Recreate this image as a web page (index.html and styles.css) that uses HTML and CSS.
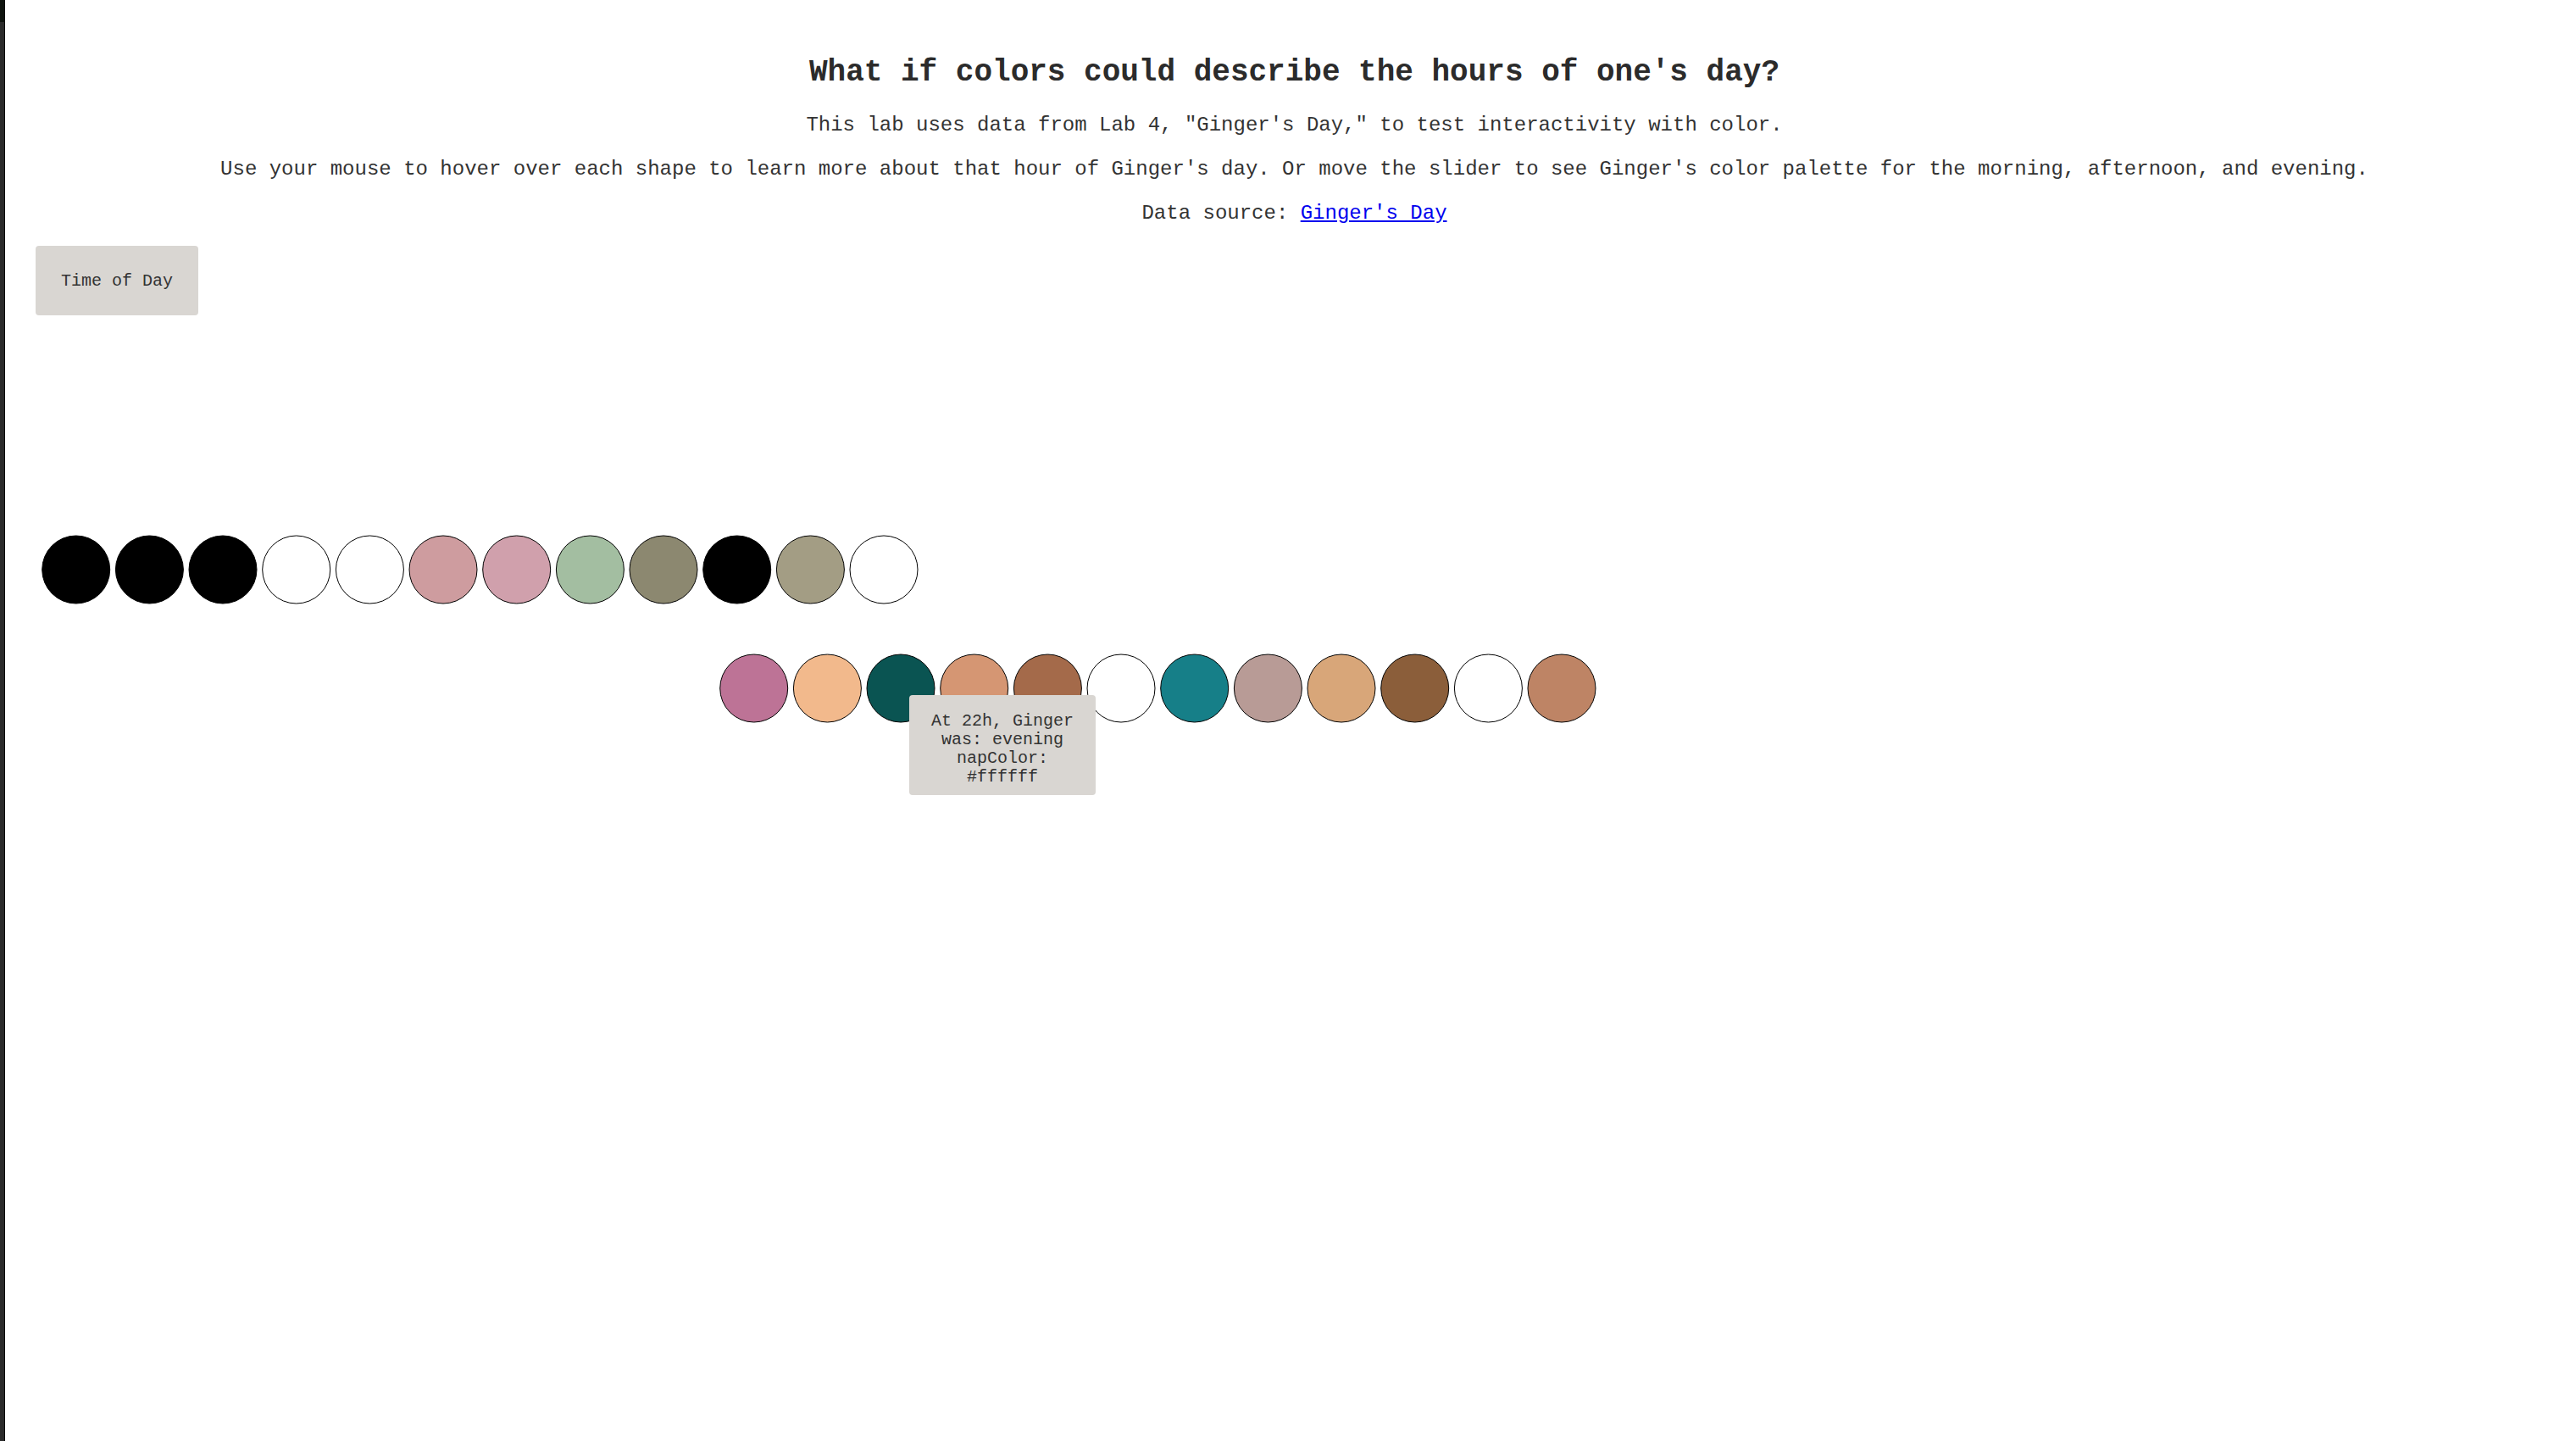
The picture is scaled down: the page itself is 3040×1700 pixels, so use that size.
FILE: index.html
```html
<!DOCTYPE html>
<html lang="en">
<head>
<meta charset="utf-8">
<title>Ginger's Day — Colors</title>
<link rel="stylesheet" href="styles.css">
</head>
<body>
<div class="edge"></div>
<main class="page">
  <h1 class="title">What if colors could describe the hours of one's day?</h1>
  <p class="lede">This lab uses data from Lab 4, "Ginger's Day," to test interactivity with color.</p>
  <p class="lede">Use your mouse to hover over each shape to learn more about that hour of Ginger's day. Or move the slider to see Ginger's color palette for the morning, afternoon, and evening.</p>
  <p class="lede">Data source: <a href="#" class="source-link">Ginger's Day</a></p>
  <div class="controls">
    <button class="time-btn" type="button">Time of Day</button>
  </div>
  <svg class="chart" width="1900" height="480" viewBox="0 0 1900 480">
    <g stroke="#000000" stroke-width="1">
      <circle cx="74.7" cy="280" r="40" fill="#000000"/>
      <circle cx="161.4" cy="280" r="40" fill="#000000"/>
      <circle cx="248" cy="280" r="40" fill="#000000"/>
      <circle cx="334.7" cy="280" r="40" fill="#ffffff"/>
      <circle cx="421.4" cy="280" r="40" fill="#ffffff"/>
      <circle cx="508" cy="280" r="40" fill="#ce9c9f"/>
      <circle cx="594.7" cy="280" r="40" fill="#d0a0ac"/>
      <circle cx="681.4" cy="280" r="40" fill="#a3bea1"/>
      <circle cx="768" cy="280" r="40" fill="#8c8870"/>
      <circle cx="854.7" cy="280" r="40" fill="#000000"/>
      <circle cx="941.4" cy="280" r="40" fill="#a39d84"/>
      <circle cx="1028" cy="280" r="40" fill="#ffffff"/>

      <circle cx="874.7" cy="420" r="40" fill="#bd7396"/>
      <circle cx="961.4" cy="420" r="40" fill="#f2b98c"/>
      <circle cx="1048" cy="420" r="40" fill="#0a5452"/>
      <circle cx="1134.7" cy="420" r="40" fill="#d59673"/>
      <circle cx="1221.4" cy="420" r="40" fill="#a46a4a"/>
      <circle cx="1308" cy="420" r="40" fill="#ffffff"/>
      <circle cx="1394.7" cy="420" r="40" fill="#167f88"/>
      <circle cx="1481.4" cy="420" r="40" fill="#b89b96"/>
      <circle cx="1568" cy="420" r="40" fill="#d8a679"/>
      <circle cx="1654.7" cy="420" r="40" fill="#8b5e3a"/>
      <circle cx="1741.4" cy="420" r="40" fill="#ffffff"/>
      <circle cx="1828" cy="420" r="40" fill="#be8465"/>
    </g>
  </svg>
  <div class="tooltip">At 22h, Ginger was: evening napColor: #ffffff</div>
</main>
</body>
</html>
```

FILE: styles.css
```css
html, body {
  margin: 0;
  padding: 0;
  background: #ffffff;
}

body {
  display: flex;
  min-height: 1700px;
  font-family: "Liberation Mono", "Courier New", monospace;
  color: #333333;
}

.edge {
  flex: 0 0 5px;
  background: linear-gradient(#0e130e 0, #0e130e 26px, #2b2b2b 26px, #2b2b2b 100%);
  border-right: 1px solid #0a0a0a;
}

.page {
  position: relative;
  flex: 1;
  padding: 0 0 0 9px;
  text-align: center;
}

.title {
  margin: 65px 0 28px;
  font-size: 36px;
  font-weight: bold;
  line-height: 41px;
  color: #2b2b2b;
}

.lede {
  margin: 0 0 25px;
  font-size: 24px;
  line-height: 27px;
  color: #333333;
}

.source-link {
  color: #0000ee;
  text-decoration: underline;
}

.controls {
  display: flex;
  padding-left: 27px;
  margin-top: 25px;
}

.time-btn {
  width: 192px;
  height: 82px;
  border: none;
  border-radius: 4px;
  background: #d9d6d2;
  font-family: "Liberation Mono", "Courier New", monospace;
  font-size: 20px;
  color: #333333;
  padding: 0;
}

.chart {
  display: block;
  margin-top: 20px;
}

.tooltip {
  position: absolute;
  left: 1067px;
  top: 820px;
  width: 200px;
  padding: 20px 10px 10px;
  border-radius: 4px;
  background: #d9d6d2;
  font-size: 20px;
  line-height: 22px;
  color: #333333;
  text-align: center;
}
```
